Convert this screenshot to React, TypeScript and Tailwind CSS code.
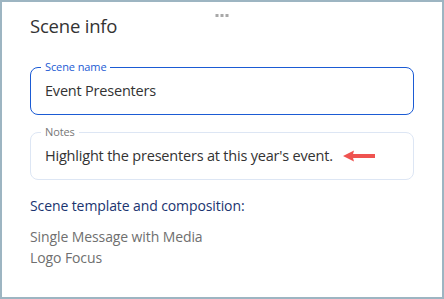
import React from "react";

function Field({
  label,
  active,
  children,
}: {
  label: string;
  active?: boolean;
  children: React.ReactNode;
}) {
  return (
    <fieldset
      className={
        "rounded-lg border px-[14px] pt-[6px] pb-[12px] " +
        (active ? "border-[#1b5bd4]" : "border-[#dde6f4]")
      }
    >
      <legend
        className={
          "-ml-1 px-1 text-[11px] leading-[14px] tracking-[-0.1px] " +
          (active ? "text-[#1b5bd4]" : "text-[#777777]")
        }
      >
        {label}
      </legend>
      {children}
    </fieldset>
  );
}

function Arrow() {
  return (
    <svg width="32" height="12" viewBox="0 0 32 12" className="ml-[10px] shrink-0">
      <path d="M0 6 L11 0.5 L9.5 6 L11 11.5 Z" fill="#ef5350" />
      <rect x="9" y="4" width="23" height="4" fill="#ef5350" />
    </svg>
  );
}

export default function App() {
  return (
    <div className="relative w-[444px] h-[299px] overflow-hidden border-2 border-[#9db5c2] bg-white font-['Open_Sans',sans-serif] text-[#333333]">
      <div className="absolute left-1/2 top-[12px] -translate-x-1/2 flex gap-[2px]">
        <span className="size-[3px] bg-[#a8a8a8]" />
        <span className="size-[3px] bg-[#a8a8a8]" />
        <span className="size-[3px] bg-[#a8a8a8]" />
      </div>

      <div className="px-[28px] pt-[11px]">
        <h1 className="text-[18.5px] leading-[26px] tracking-[-0.2px]">Scene info</h1>

        <div className="mt-[21px] flex flex-col gap-[10px]">
          <Field label="Scene name" active>
            <div className="text-[14.5px] leading-[22px] tracking-[-0.2px]">Event Presenters</div>
          </Field>
          <Field label="Notes">
            <div className="flex items-center text-[14.5px] leading-[22px] tracking-[-0.2px]">
              <span>Highlight the presenters at this year's event.</span>
              <Arrow />
            </div>
          </Field>
        </div>

        <h2 className="mt-[16px] text-[14px] leading-[20px] tracking-[-0.1px] text-[#1a3470]">
          Scene template and composition:
        </h2>
        <div className="mt-[10px] text-[14px] leading-[21px] tracking-[-0.1px] text-[#6f6f6f]">
          <div>Single Message with Media</div>
          <div>Logo Focus</div>
        </div>
      </div>
    </div>
  );
}
